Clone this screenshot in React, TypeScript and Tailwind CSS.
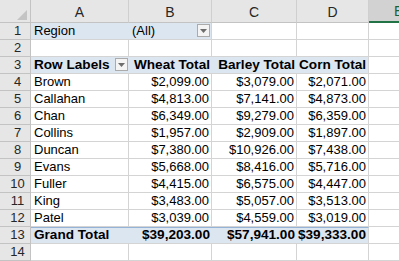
import React from 'react';

type Row = { label: string; b: string; c: string; d: string };

const rows: Row[] = [
  { label: 'Brown', b: '$2,099.00', c: '$3,079.00', d: '$2,071.00' },
  { label: 'Callahan', b: '$4,813.00', c: '$7,141.00', d: '$4,873.00' },
  { label: 'Chan', b: '$6,349.00', c: '$9,279.00', d: '$6,359.00' },
  { label: 'Collins', b: '$1,957.00', c: '$2,909.00', d: '$1,897.00' },
  { label: 'Duncan', b: '$7,380.00', c: '$10,926.00', d: '$7,438.00' },
  { label: 'Evans', b: '$5,668.00', c: '$8,416.00', d: '$5,716.00' },
  { label: 'Fuller', b: '$4,415.00', c: '$6,575.00', d: '$4,447.00' },
  { label: 'King', b: '$3,483.00', c: '$5,057.00', d: '$3,513.00' },
  { label: 'Patel', b: '$3,039.00', c: '$4,559.00', d: '$3,019.00' },
];

const DropButton: React.FC = () => (
  <span className="flex items-center justify-center w-[13px] h-[13px] border border-[#ababab] bg-[#f4f4f4] shrink-0">
    <svg width="7" height="4" viewBox="0 0 7 4">
      <path d="M0 0h7L3.5 4z" fill="#6d6d6d" />
    </svg>
  </span>
);

const RowHead: React.FC<{ n: number }> = ({ n }) => (
  <div className="flex items-end justify-center pl-[5px] pb-[1px] bg-[#e6e6e6] border-r border-b border-[#c3c3c3] text-[#262626] text-[13px] leading-[15px]">
    {n}
  </div>
);

const Cell: React.FC<{ children?: React.ReactNode; className?: string }> = ({ children, className = '' }) => (
  <div className={`flex items-end pb-[1px] px-[3px] whitespace-nowrap overflow-hidden border-b leading-[15px] ${className}`}>
    {children}
  </div>
);

export default function App() {
  const grid = 'border-r border-[#d4d4d4] border-b-[#d4d4d4]';
  const blue = 'bg-[#dce6f1] border-b-[#d4d4d4]';
  const bold = 'font-bold text-[13.6px]';
  return (
    <div className="w-[399px] h-[261px] overflow-hidden bg-white text-black text-[13px] font-['Liberation_Sans',Arial,sans-serif]">
      <div className="grid grid-cols-[31px_98px_83px_85px_72px_1fr] grid-rows-[23px_repeat(14,17px)]">
        {/* column headers */}
        <div className="relative bg-[#e6e6e6] border-r border-b border-[#c3c3c3]">
          <svg className="absolute left-[17px] top-[10px]" width="10" height="10" viewBox="0 0 10 10">
            <path d="M10 0v10H0z" fill="#c4c4c4" />
          </svg>
        </div>
        {['A', 'B', 'C', 'D'].map((c) => (
          <div key={c} className="flex items-end justify-center pb-[2px] bg-[#e6e6e6] border-r border-b border-r-[#cfcfcf] border-b-[#c3c3c3] text-[#262626] text-[14px] leading-[16px]">
            {c}
          </div>
        ))}
        <div className="flex items-end pl-[25px] pb-[2px] bg-[#d2d2d2] border-b-2 border-[#217346] text-[#1b5e38] text-[14px] leading-[16px]">
          E
        </div>

        {/* row 1 */}
        <RowHead n={1} />
        <Cell className={blue}>Region</Cell>
        <Cell className={`${blue} justify-between pr-[1px] border-r border-r-[#d4d4d4]`}>
          <span>(All)</span>
          <span className="mb-[1px]"><DropButton /></span>
        </Cell>
        <Cell className={grid} />
        <Cell className={grid} />
        <Cell className="border-b-[#d4d4d4]" />

        {/* row 2 */}
        <RowHead n={2} />
        <Cell className={grid} />
        <Cell className={grid} />
        <Cell className={grid} />
        <Cell className={grid} />
        <Cell className="border-b-[#d4d4d4]" />

        {/* row 3 */}
        <RowHead n={3} />
        <Cell className={`${blue} ${bold} justify-between pr-[1px]`}>
          <span>Row Labels</span>
          <span className="mb-[1px]"><DropButton /></span>
        </Cell>
        <Cell className={`${blue} ${bold} justify-end pr-[2px]`}>Wheat Total</Cell>
        <Cell className={`${blue} ${bold} justify-end pr-[2px]`}>Barley Total</Cell>
        <Cell className={`${blue} ${bold} justify-end pr-[2px] border-r border-r-[#d4d4d4]`}>Corn Total</Cell>
        <Cell className="border-b-[#d4d4d4]" />

        {rows.map((r, i) => (
          <React.Fragment key={r.label}>
            <RowHead n={i + 4} />
            <Cell className={grid}>{r.label}</Cell>
            <Cell className={`${grid} justify-end pr-[2px]`}>{r.b}</Cell>
            <Cell className={`${grid} justify-end pr-[2px]`}>{r.c}</Cell>
            <Cell className={`${grid} justify-end pr-[2px]`}>{r.d}</Cell>
            <Cell className="border-b-[#d4d4d4]" />
          </React.Fragment>
        ))}

        {/* row 13 grand total */}
        <RowHead n={13} />
        <Cell className={`${blue} ${bold} border-t border-t-[#95b3d7]`}>Grand Total</Cell>
        <Cell className={`${blue} ${bold} justify-end pr-[2px] border-t border-t-[#95b3d7]`}>$39,203.00</Cell>
        <Cell className={`${blue} ${bold} justify-end pr-[2px] border-t border-t-[#95b3d7]`}>$57,941.00</Cell>
        <Cell className={`${blue} ${bold} justify-end pr-[2px] border-t border-t-[#95b3d7] border-r border-r-[#d4d4d4]`}>$39,333.00</Cell>
        <Cell className="border-b-[#d4d4d4]" />

        {/* row 14 */}
        <RowHead n={14} />
        <Cell className={grid} />
        <Cell className={grid} />
        <Cell className={grid} />
        <Cell className={grid} />
        <Cell className="border-b-[#d4d4d4]" />
      </div>
    </div>
  );
}
